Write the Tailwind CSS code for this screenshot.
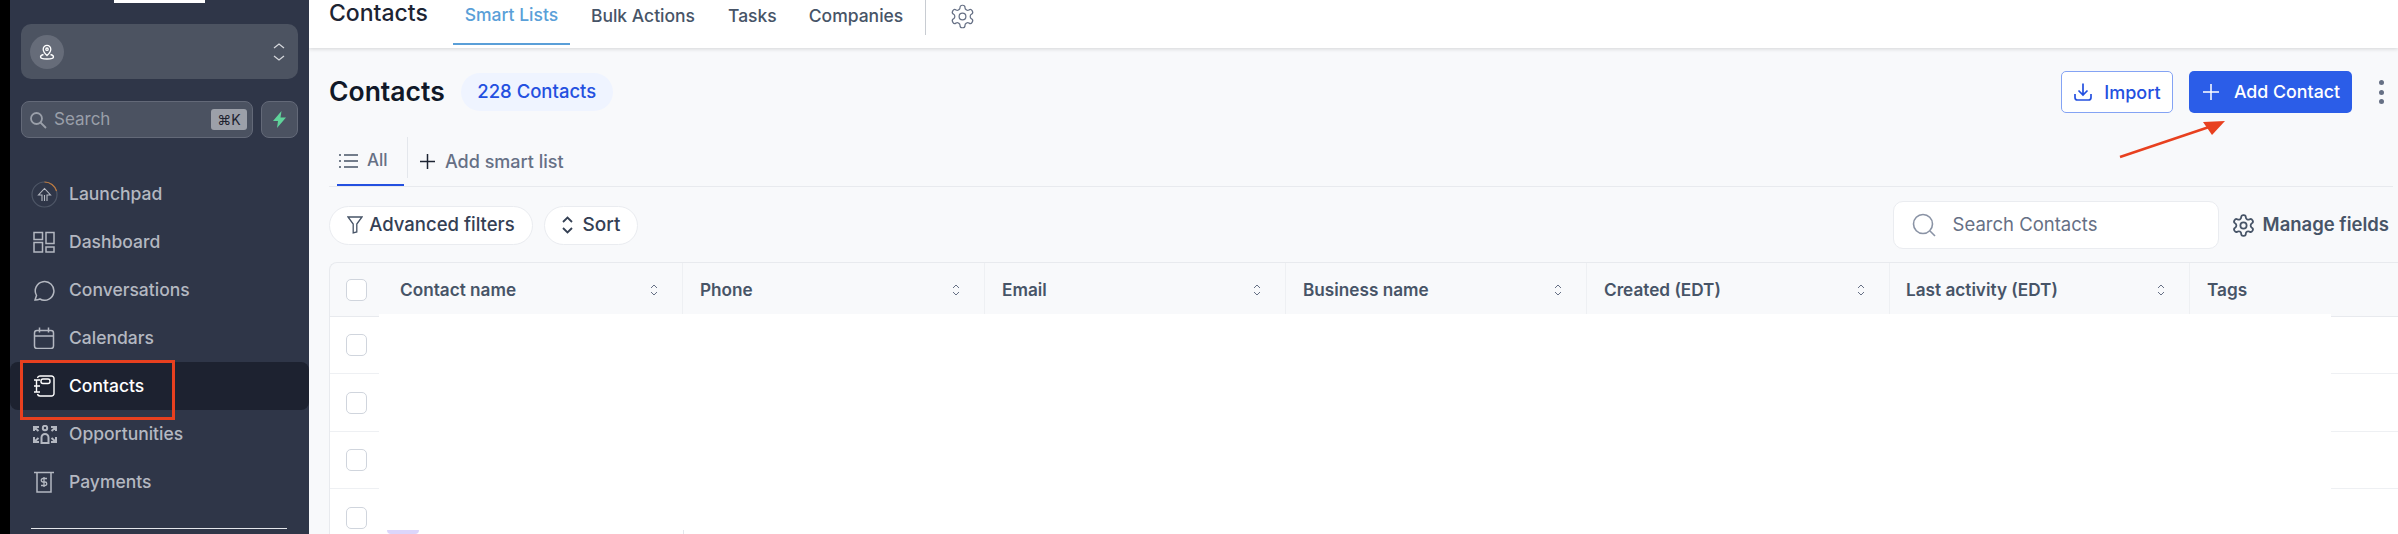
<!DOCTYPE html>
<html lang="en">
<head>
  <meta charset="UTF-8" />
  <title>Contacts</title>
  <script src="https://cdn.jsdelivr.net/npm/@tailwindcss/browser@4"></script>
</head>
<body class="relative h-[534px] w-[2398px] overflow-hidden bg-black font-['Inter',sans-serif] text-[#344054]">
  <div class="flex h-full pl-[10px]">

    <!-- Sidebar -->
    <aside class="relative h-full w-[299px] shrink-0 bg-[#2f3648] px-[11px] pt-[24px]">
      <div class="absolute left-[104px] top-0 h-[3px] w-[91px] bg-white"></div>

      <div class="flex h-[55px] items-center justify-between rounded-[10px] bg-[#4c5361] pl-[9px] pr-[13px]">
        <div class="flex h-[34px] w-[34px] items-center justify-center rounded-full bg-[#666c79]">
          <svg class="h-[18px] w-[18px]" viewBox="0 0 18 18" fill="none" stroke="white" stroke-width="1.3"><path d="M9 12.5C6.8 10.4 5.2 8.6 5.2 6.2a3.8 3.8 0 0 1 7.6 0c0 2.4-1.6 4.2-3.8 6.3z"/><circle cx="9" cy="6.2" r="1.2"/><path d="M5.5 11.5C3.5 12 2.5 13 2.5 14c0 1.5 3 2 6.5 2s6.5-.5 6.5-2c0-1-1-2-3-2.5"/></svg>
        </div>
        <svg class="h-[20px] w-[12px]" viewBox="0 0 12 20" fill="none" stroke="#d5d7dc" stroke-width="1.3"><path d="M1 6l5-4 5 4M1 14l5 4 5-4"/></svg>
      </div>

      <div class="mt-[22px] flex gap-[8px]">
        <div class="flex h-[37px] w-[232px] items-center rounded-[8px] border border-[#636978] bg-[#4b5261] pl-[7px] pr-[5px]">
          <svg class="h-[18px] w-[18px]" viewBox="0 0 18 18" fill="none" stroke="#9a9fa9" stroke-width="1.8"><circle cx="7.5" cy="7.5" r="5.5"/><path d="M11.5 11.5L17 17"/></svg>
          <span class="ml-[7px] text-[17px] text-[#9a9fa9]">Search</span>
          <span class="ml-auto flex h-[21px] w-[36px] items-center justify-center rounded-[3px] bg-[#9ca0a9] text-[14px] text-[#1e2330]">⌘K</span>
        </div>
        <div class="flex h-[37px] w-[37px] items-center justify-center rounded-[8px] border border-[#636978] bg-[#4b5261]">
          <svg class="h-[17px] w-[15px]" viewBox="0 0 15 17" fill="#5fd39a"><path d="M9.5 0L1 10h5l-1 7 9-10.5H8.5z"/></svg>
        </div>
      </div>

      <nav class="mt-[32px] text-[17.5px] font-medium text-[#b4b8c1]">
        <a class="flex h-[48px] items-center gap-[11px] pl-[10px]">
          <svg class="h-[27px] w-[27px] shrink-0" viewBox="0 0 27 27" fill="none"><circle cx="13.5" cy="13.5" r="12.5" stroke="#4e5666" stroke-width="1.2"/><path d="M13.5 1a12.5 12.5 0 0 1 12 9" stroke="#c07a3c" stroke-width="1.2"/><path d="M11 20v-6H7.5l6-6.5 6 6.500H16v6M13.5 14v6" stroke="#b4b8c1" stroke-width="1.1"/></svg>
          <span>Launchpad</span>
        </a>
        <a class="flex h-[48px] items-center gap-[14px] pl-[12px]">
          <svg class="h-[22px] w-[22px] shrink-0" viewBox="0 0 22 22" fill="none" stroke="#b4b8c1" stroke-width="1.5"><rect x="1" y="1.5" width="8.5" height="7"/><rect x="13" y="1.5" width="8" height="11"/><rect x="1" y="11.5" width="8.5" height="9.5"/><rect x="13" y="16" width="8" height="5"/></svg>
          <span>Dashboard</span>
        </a>
        <a class="flex h-[48px] items-center gap-[14px] pl-[12px]">
          <svg class="h-[22px] w-[22px] shrink-0" viewBox="0 0 22 22" fill="none" stroke="#b4b8c1" stroke-width="1.5"><path d="M2 21l1.5-4.5A9.3 9.3 0 1 1 7 20a11 11 0 0 1-5 1z"/></svg>
          <span>Conversations</span>
        </a>
        <a class="flex h-[48px] items-center gap-[14px] pl-[12px]">
          <svg class="h-[22px] w-[22px] shrink-0" viewBox="0 0 22 22" fill="none" stroke="#b4b8c1" stroke-width="1.5"><rect x="1.5" y="3.5" width="19" height="18" rx="2.5"/><path d="M1.5 9h19M6.5 0.5v5M15.5 0.5v5"/></svg>
          <span>Calendars</span>
        </a>
        <a class="-ml-[11px] flex h-[48px] w-[299px] items-center gap-[14px] rounded-[8px] bg-[#1d2230] pl-[23px] text-white">
          <svg class="h-[22px] w-[22px] shrink-0" viewBox="0 0 22 22" fill="none" stroke="white" stroke-width="1.4"><path d="M4.5 3A2.500 2.500 0 0 1 7 1h11.500A2.500 2.500 0 0 1 21 3.500v15a2.500 2.500 0 0 1-2.500 2.500H7a2.500 2.500 0 0 1-2.500-2"/><rect x="8" y="4" width="9" height="4.5" rx="2"/><path d="M1 5h6M1 11h6M1 17h6M3.5 5v12"/></svg>
          <span>Contacts</span>
        </a>
        <a class="flex h-[48px] items-center gap-[11px] pl-[11px]">
          <svg class="h-[19px] w-[26px] shrink-0" viewBox="0 0 26 19" fill="none" stroke="#b4b8c1" stroke-width="2"><circle cx="13" cy="3" r="2.2"/><path d="M9.500 18v-5.500a3.500 3.500 0 0 1 7 0V18zM7 2H2v4M2 2l4.500 4M19 2h5v4M24 2l-4.500 4M2 12v5h5M2 17l4.500-4M24 12v5h-5M24 17l-4.500-4"/></svg>
          <span>Opportunities</span>
        </a>
        <a class="flex h-[48px] items-center gap-[14px] pl-[12px]">
          <svg class="h-[22px] w-[22px] shrink-0" viewBox="0 0 22 22" fill="none" stroke="#b4b8c1" stroke-width="1.5"><path d="M1 1.5h20M4 1.5V21h14V1.5"/><path d="M14 7.500h-4a1.500 1.500 0 0 0 0 3.500h2a1.500 1.500 0 0 1 0 3.500H8M11 6v10" stroke-width="1.3"/></svg>
          <span>Payments</span>
        </a>
      </nav>

      <div class="ml-[10px] mt-[22px] h-px w-[256px] bg-[#e4e6ea]"></div>
    </aside>

    <!-- Main -->
    <main class="flex h-full min-w-0 flex-1 flex-col bg-[#f8f9fb]">
      <header class="flex h-[48px] items-stretch bg-white pl-[20px] shadow-[0_1px_4px_rgba(0,0,0,0.15)]">
        <h2 class="mr-[25px] mt-[-2px] flex h-[30px] items-center text-[23px] font-medium text-[#1d2433]">Contacts</h2>
        <a class="flex h-[45px] w-[117px] items-center justify-center border-b-[2px] border-[#5a9fd8] pb-[13px] text-[17.5px] font-medium text-[#5a9fd8]">Smart Lists</a>
        <a class="ml-[21px] flex h-[45px] items-center pb-[12px] text-[17.5px] font-medium text-[#475467]">Bulk Actions</a>
        <a class="ml-[33px] flex h-[45px] items-center pb-[12px] text-[17.5px] font-medium text-[#475467]">Tasks</a>
        <a class="ml-[32px] flex h-[45px] items-center pb-[12px] text-[17.5px] font-medium text-[#475467]">Companies</a>
        <div class="ml-[22px] h-[35px] w-px bg-[#c8ccd2]"></div>
        <div class="ml-[23px] flex h-[45px] items-center pb-[12px]">
          <svg class="h-[27px] w-[27px]" viewBox="0 0 24 24" fill="none" stroke="#667085" stroke-width="1.1"><path d="M12.22 2h-.44a2 2 0 0 0-2 2v.18a2 2 0 0 1-1 1.73l-.43.25a2 2 0 0 1-2 0l-.15-.08a2 2 0 0 0-2.73.73l-.22.38a2 2 0 0 0 .73 2.73l.15.1a2 2 0 0 1 1 1.72v.51a2 2 0 0 1-1 1.74l-.15.09a2 2 0 0 0-.73 2.73l.22.38a2 2 0 0 0 2.73.73l.15-.08a2 2 0 0 1 2 0l.43.25a2 2 0 0 1 1 1.73V20a2 2 0 0 0 2 2h.44a2 2 0 0 0 2-2v-.18a2 2 0 0 1 1-1.73l.43-.25a2 2 0 0 1 2 0l.15.08a2 2 0 0 0 2.73-.73l.22-.39a2 2 0 0 0-.73-2.73l-.15-.08a2 2 0 0 1-1-1.74v-.5a2 2 0 0 1 1-1.74l.15-.09a2 2 0 0 0 .73-2.73l-.22-.38a2 2 0 0 0-2.73-.73l-.15.08a2 2 0 0 1-2 0l-.43-.25a2 2 0 0 1-1-1.73V4a2 2 0 0 0-2-2z"/><circle cx="12" cy="12" r="3"/></svg>
        </div>
      </header>

      <div class="flex-1 pl-[20px] pr-[5px]">
        <div class="flex h-[63px] items-end">
          <div class="flex h-[38px] items-center">
            <h1 class="text-[26.5px] font-semibold text-[#101828]">Contacts</h1>
            <span class="ml-[16px] flex h-[38px] w-[152px] items-center justify-center rounded-full bg-[#eff4ff] text-[18.5px] font-medium text-[#2450e0]">228 Contacts</span>
          </div>
          <div class="ml-auto flex h-[42px] items-center mb-[-2px]">
            <button class="flex h-[42px] w-[112px] items-center justify-center gap-[11px] rounded-[5px] border border-[#84a3f4] bg-white text-[18px] font-medium text-[#2450e0]">
              <svg class="h-[20px] w-[20px]" viewBox="0 0 20 20" fill="none" stroke="#2450e0" stroke-width="1.7"><path d="M10 1.5v11M5.5 8.5l4.5 4.5 4.5-4.500M2 12v3.500A2.500 2.500 0 0 0 4.500 18h11a2.500 2.500 0 0 0 2.500-2.500V12"/></svg>
              Import
            </button>
            <button class="ml-[16px] flex h-[42px] w-[163px] items-center justify-center gap-[15px] rounded-[5px] bg-[#2b5de8] pl-[2px] text-[17.8px] font-medium text-white">
              <svg class="h-[16px] w-[16px]" viewBox="0 0 16 16" fill="none" stroke="white" stroke-width="1.5"><path d="M8 0v16M0 8h16"/></svg>
              Add Contact
            </button>
            <div class="ml-[27px] mr-[9px] flex flex-col gap-[4.5px]">
              <span class="h-[5px] w-[5px] rounded-full bg-[#667085]"></span>
              <span class="h-[5px] w-[5px] rounded-full bg-[#667085]"></span>
              <span class="h-[5px] w-[5px] rounded-full bg-[#667085]"></span>
            </div>
          </div>
        </div>

        <!-- Smart list tabs -->
        <div class="mt-[28px] flex h-[48px] items-stretch border-b border-[#e8eaee] pl-[8px]">
          <a class="flex w-[67px] items-center gap-[9px] border-b-[2px] border-[#2450e0] pl-[1px] pb-[2px] text-[17px] font-medium text-[#667085]">
            <svg class="h-[18px] w-[20px]" viewBox="0 0 20 18" fill="none" stroke="#475467" stroke-width="1.6"><path d="M6 3h14M6 9h14M6 15h14M1 3h2M1 9h2M1 15h2"/></svg>
            All
          </a>
          <div class="ml-[3px] mt-[-2px] h-[41px] w-px bg-[#e4e7ec]"></div>
          <a class="flex items-center gap-[10px] pl-[12px] pb-[3px] text-[18px] font-medium text-[#667085]">
            <svg class="h-[15px] w-[15px]" viewBox="0 0 15 15" fill="none" stroke="#1d2433" stroke-width="1.5"><path d="M7.5 0v15M0 7.5h15"/></svg>
            Add smart list
          </a>
        </div>

        <!-- Filters -->
        <div class="mt-[14px] flex h-[48px] items-center">
          <button class="flex h-[39px] w-[204px] items-center justify-center gap-[6px] rounded-full border border-[#eaecf0] bg-white text-[18.5px] font-medium text-[#344054]">
            <svg class="h-[18px] w-[16px]" viewBox="0 0 16 18" fill="none" stroke="#475467" stroke-width="1.3"><path d="M1 1h14l-5.2 7v8l-3.600 1V8z"/></svg>
            Advanced filters
          </button>
          <button class="ml-[11px] flex h-[39px] w-[94px] items-center justify-center gap-[10px] rounded-full border border-[#eaecf0] bg-white text-[19px] font-medium text-[#344054]">
            <svg class="h-[18px] w-[11px]" viewBox="0 0 11 18" fill="none" stroke="#344054" stroke-width="1.8"><path d="M1 6l4.5-4.5L10 6M1 12l4.5 4.5L10 12"/></svg>
            Sort
          </button>
          <div class="ml-auto flex h-[48px] w-[326px] items-center rounded-[10px] border border-[#eaecf0] bg-white pl-[18px] text-[18.5px] text-[#667085]">
            <svg class="h-[24px] w-[24px]" viewBox="0 0 24 24" fill="none" stroke="#8a93a5" stroke-width="1.6"><circle cx="11" cy="11" r="9.5"/><path d="M18 18l5 5"/></svg>
            <span class="ml-[17px]">Search Contacts</span>
          </div>
          <button class="ml-[12px] mr-[4px] flex items-center gap-[7px] text-[18.5px] font-semibold text-[#475467]">
            <svg class="h-[25px] w-[25px]" viewBox="0 0 24 24" fill="none" stroke="#475467" stroke-width="1.7"><path d="M12.22 2h-.44a2 2 0 0 0-2 2v.18a2 2 0 0 1-1 1.73l-.43.25a2 2 0 0 1-2 0l-.15-.08a2 2 0 0 0-2.73.73l-.22.38a2 2 0 0 0 .73 2.73l.15.1a2 2 0 0 1 1 1.72v.51a2 2 0 0 1-1 1.74l-.15.09a2 2 0 0 0-.73 2.73l.22.38a2 2 0 0 0 2.73.73l.15-.08a2 2 0 0 1 2 0l.43.25a2 2 0 0 1 1 1.73V20a2 2 0 0 0 2 2h.44a2 2 0 0 0 2-2v-.18a2 2 0 0 1 1-1.73l.43-.25a2 2 0 0 1 2 0l.15.08a2 2 0 0 0 2.73-.73l.22-.39a2 2 0 0 0-.73-2.73l-.15-.08a2 2 0 0 1-1-1.74v-.5a2 2 0 0 1 1-1.74l.15-.09a2 2 0 0 0 .73-2.73l-.22-.38a2 2 0 0 0-2.73-.73l-.15.08a2 2 0 0 1-2 0l-.43-.25a2 2 0 0 1-1-1.73V4a2 2 0 0 0-2-2z"/><circle cx="12" cy="12" r="3"/></svg>
            Manage fields
          </button>
        </div>

        <!-- Table -->
        <div class="relative mr-[-5px] mt-[13px] h-[272px] rounded-tl-[8px] border-l border-t border-[#e8eaee]">
          <div class="flex h-[54px] border-b border-[#e8eaee] text-[17.2px] font-semibold text-[#475467]">
            <div class="flex w-[353px] items-center border-r border-[#eef0f3] pl-[16px] pr-[24px]">
              <span class="h-[22px] w-[21px] rounded-[5px] border border-[#d0d5dd] bg-white"></span>
              <span class="ml-[33px]">Contact name</span>
              <svg class="ml-auto h-[14px] w-[8px]" viewBox="0 0 8 14" fill="none" stroke="#667085"><path d="M1 5l3-3 3 3M1 9l3 3 3-3"/></svg>
            </div>
            <div class="flex w-[302px] items-center border-r border-[#eef0f3] pl-[17px] pr-[24px]">Phone<svg class="ml-auto h-[14px] w-[8px]" viewBox="0 0 8 14" fill="none" stroke="#667085"><path d="M1 5l3-3 3 3M1 9l3 3 3-3"/></svg></div>
            <div class="flex w-[301px] items-center border-r border-[#eef0f3] pl-[17px] pr-[24px]">Email<svg class="ml-auto h-[14px] w-[8px]" viewBox="0 0 8 14" fill="none" stroke="#667085"><path d="M1 5l3-3 3 3M1 9l3 3 3-3"/></svg></div>
            <div class="flex w-[301px] items-center border-r border-[#eef0f3] pl-[17px] pr-[24px]">Business name<svg class="ml-auto h-[14px] w-[8px]" viewBox="0 0 8 14" fill="none" stroke="#667085"><path d="M1 5l3-3 3 3M1 9l3 3 3-3"/></svg></div>
            <div class="flex w-[303px] items-center border-r border-[#eef0f3] pl-[17px] pr-[24px]">Created (EDT)<svg class="ml-auto h-[14px] w-[8px]" viewBox="0 0 8 14" fill="none" stroke="#667085"><path d="M1 5l3-3 3 3M1 9l3 3 3-3"/></svg></div>
            <div class="flex w-[300px] items-center border-r border-[#eef0f3] pl-[16px] pr-[24px]">Last activity (EDT)<svg class="ml-auto h-[14px] w-[8px]" viewBox="0 0 8 14" fill="none" stroke="#667085"><path d="M1 5l3-3 3 3M1 9l3 3 3-3"/></svg></div>
            <div class="flex flex-1 items-center pl-[17px]">Tags</div>
          </div>
          <div class="bg-white">
            <div class="flex h-[57px] items-center border-b border-[#eef0f3] pl-[16px]"><span class="h-[22px] w-[21px] rounded-[5px] border border-[#d0d5dd] bg-white"></span></div>
            <div class="flex h-[58px] items-center border-b border-[#eef0f3] pl-[16px]"><span class="h-[22px] w-[21px] rounded-[5px] border border-[#d0d5dd] bg-white"></span></div>
            <div class="flex h-[57px] items-center border-b border-[#eef0f3] pl-[16px]"><span class="h-[22px] w-[21px] rounded-[5px] border border-[#d0d5dd] bg-white"></span></div>
            <div class="flex h-[57px] items-center pl-[16px]"><span class="h-[22px] w-[21px] rounded-[5px] border border-[#d0d5dd] bg-white"></span></div>
          </div>
          <!-- pasted white block hiding the row data -->
          <div class="absolute left-[49px] top-[51px] h-[220px] w-[1952px] bg-white"></div>
          <div class="absolute left-[57px] top-[267px] h-[4px] w-[32px] rounded-b-[10px] bg-[#dcd6fb]"></div>
          <div class="absolute left-[353px] top-[267px] h-[4px] w-px bg-[#e4e7ec]"></div>
        </div>
      </div>
    </main>
  </div>

  <!-- Annotations -->
  <div class="absolute left-[20px] top-[360px] h-[60px] w-[155px] border-[3px] border-[#e8401f]"></div>
  <svg class="absolute left-[2115px] top-[115px] h-[50px] w-[115px]" viewBox="0 0 115 50" fill="none">
    <path d="M5 42L100 10" stroke="#e8401f" stroke-width="2.5"/>
    <path d="M110 6L88 7L97 20z" fill="#e8401f"/>
  </svg>
</body>
</html>
